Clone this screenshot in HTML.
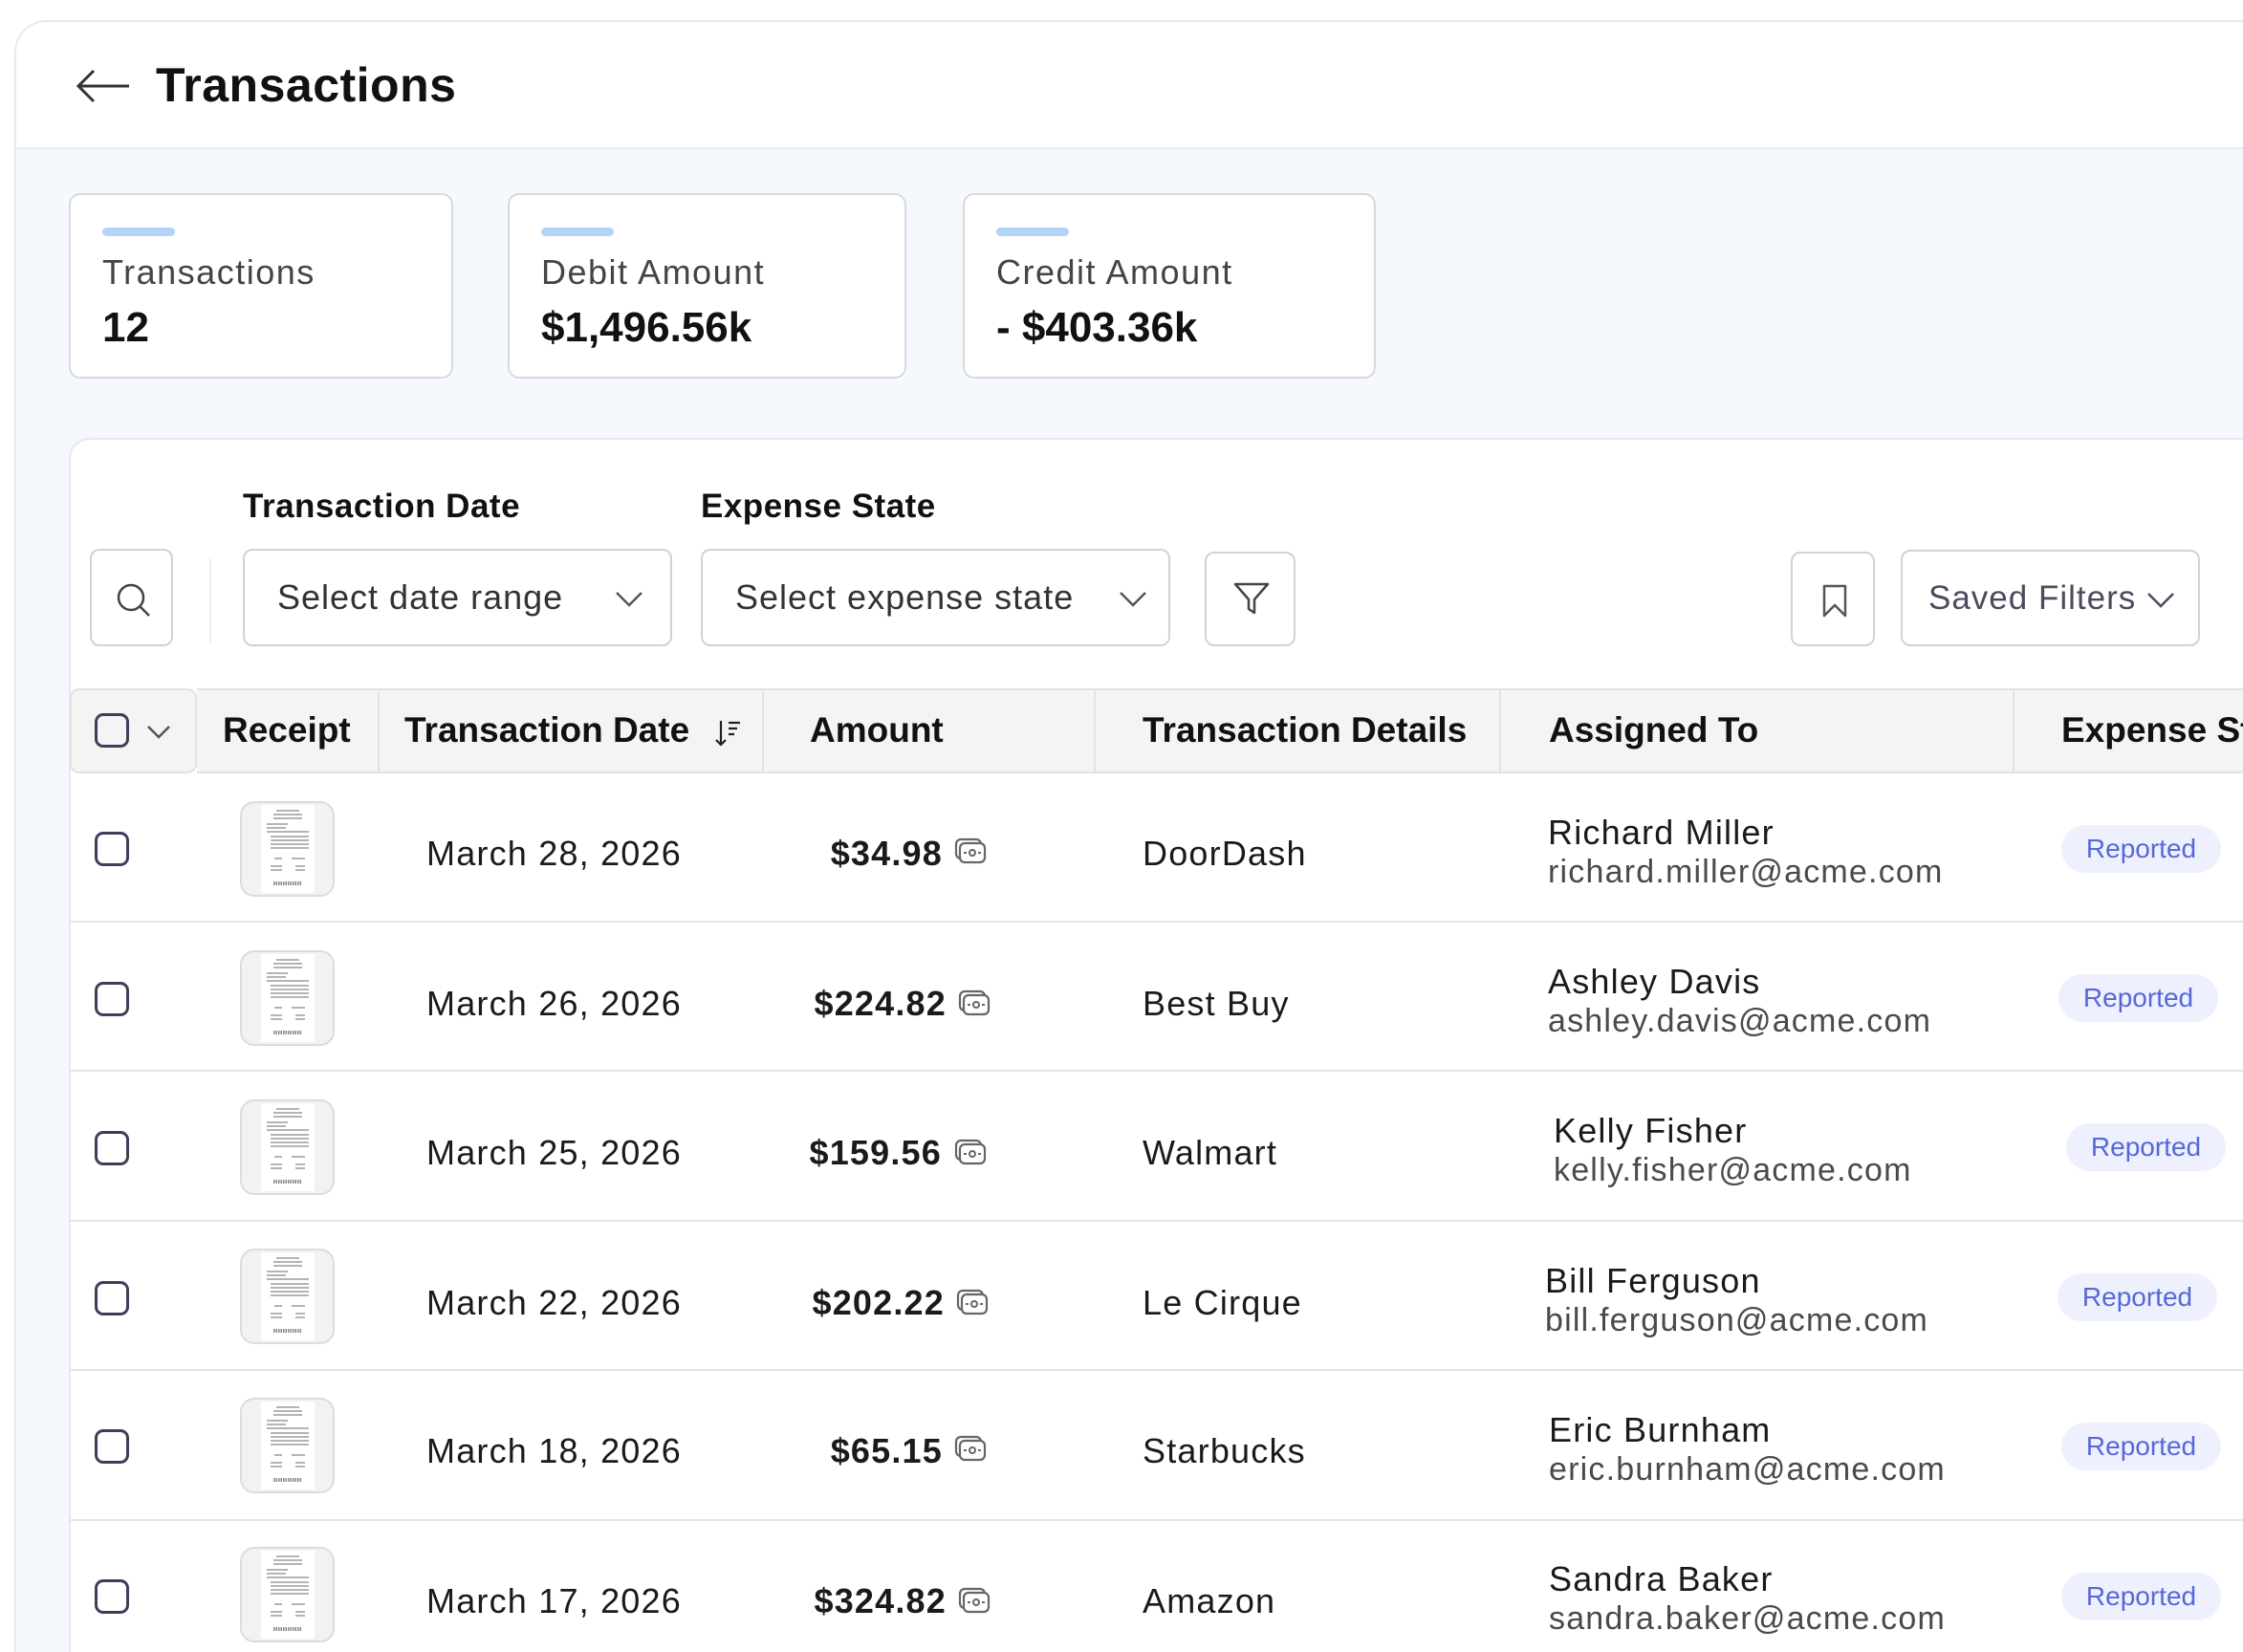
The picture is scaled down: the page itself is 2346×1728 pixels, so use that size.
<!DOCTYPE html>
<html style="width:2346px;height:1728px;overflow:hidden"><head><meta charset="utf-8"><style>
*{box-sizing:border-box;margin:0;padding:0}
body{width:2346px;height:1728px;overflow:hidden;background:#fff;font-family:"Liberation Sans",sans-serif;color:#1a1a1a;position:relative}
.a{position:absolute;white-space:nowrap}
.card{position:absolute;top:21px;left:15px;width:2400px;height:1707px;border:2px solid #e6e8ec;border-bottom:none;border-radius:34px 0 0 0;background:#f5f8fc;overflow:hidden}
.hdr{position:absolute;left:0;top:0;right:0;height:133px;background:#fff;border-bottom:2px solid #e8ebef}
.stat{position:absolute;top:202px;height:194px;background:#fff;border:2px solid #d6d9dd;border-radius:12px}
.stat .bar{position:absolute;left:33px;top:34px;width:76px;height:9px;border-radius:5px;background:#b3d3f7}
.stat .l{position:absolute;left:33px;top:60px;font-size:36px;color:#444;letter-spacing:1.5px}
.stat .v{position:absolute;left:33px;top:114px;font-size:44px;font-weight:bold;color:#111}
.panel{position:absolute;left:72px;top:458px;width:2300px;height:1270px;background:#fff;border:2px solid #e6e8ec;border-bottom:none;border-radius:22px 0 0 0}
.box{position:absolute;border:2px solid #cfd2d6;border-radius:10px;background:#fff}
.sel{font-size:36px;color:#333;padding-left:34px;line-height:98px;letter-spacing:1px}
.th{position:absolute;top:720px;height:89px;background:#f4f4f4;border-top:2px solid #e2e2e2;border-bottom:2px solid #e2e2e2;font-size:37px;font-weight:bold;line-height:86px;color:#111}
.row{position:absolute;left:73px;width:2300px;border-bottom:2px solid #e4e4e4;height:156px}
.cb{position:absolute;width:36px;height:36px;border:3px solid #3d3f5a;border-radius:9px}
.t{font-size:36px;color:#1a1a1a;letter-spacing:1.2px}
.hd{font-size:37px;font-weight:bold;color:#111}
.badge{position:absolute;width:167px;height:50px;border-radius:25px;background:#eef1fd;color:#5668d8;font-size:28px;text-align:center;line-height:50px}
</style></head><body>
<div class="card">
 <div class="hdr"></div>
</div>
<svg class="a" style="left:78px;top:70px" width="60" height="40" viewBox="0 0 60 40"><path d="M57 20H5M20 4L4 20L20 36" fill="none" stroke="#333" stroke-width="3"/></svg>
<div class="a" style="left:163px;top:60px;font-size:50px;font-weight:bold;color:#111;letter-spacing:0.5px">Transactions</div>

<div class="stat" style="left:72px;width:402px"><div class="bar"></div><div class="l">Transactions</div><div class="v">12</div></div>
<div class="stat" style="left:531px;width:417px"><div class="bar"></div><div class="l">Debit Amount</div><div class="v">$1,496.56k</div></div>
<div class="stat" style="left:1007px;width:432px"><div class="bar"></div><div class="l">Credit Amount</div><div class="v">- $403.36k</div></div>

<div class="panel"></div>
<div class="a" style="left:254px;top:510px;font-size:35px;font-weight:bold;color:#111;letter-spacing:0.5px">Transaction Date</div>
<div class="a" style="left:733px;top:510px;font-size:35px;font-weight:bold;color:#111;letter-spacing:0.5px">Expense State</div>
<div class="box" style="left:94px;top:574px;width:87px;height:102px"><svg style="position:absolute;left:25px;top:33px" width="38" height="38" viewBox="0 0 38 38"><circle cx="16" cy="16" r="13" fill="none" stroke="#444" stroke-width="2.5"/><path d="M26 26L35 35" stroke="#444" stroke-width="2.5"/></svg></div>
<div class="a" style="left:219px;top:584px;width:2px;height:88px;background:#eceef1"></div>
<div class="box sel" style="left:254px;top:574px;width:449px;height:102px">Select date range<svg style="position:absolute;right:28px;top:42px" width="30" height="18" viewBox="0 0 30 18"><path d="M2 2L15 15L28 2" fill="none" stroke="#555" stroke-width="2.5"/></svg></div>
<div class="box sel" style="left:733px;top:574px;width:491px;height:102px">Select expense state<svg style="position:absolute;right:22px;top:42px" width="30" height="18" viewBox="0 0 30 18"><path d="M2 2L15 15L28 2" fill="none" stroke="#555" stroke-width="2.5"/></svg></div>
<div class="box" style="left:1260px;top:577px;width:95px;height:99px"><svg style="position:absolute;left:28px;top:30px" width="38" height="36" viewBox="0 0 38 36"><path d="M2 2H36L22 18V32L16 28V18Z" fill="none" stroke="#444" stroke-width="2.5" stroke-linejoin="round"/></svg></div>
<div class="box" style="left:1873px;top:577px;width:88px;height:99px"><svg style="position:absolute;left:30px;top:32px" width="28" height="36" viewBox="0 0 28 36"><path d="M3 2H25V33L14 22L3 33Z" fill="none" stroke="#555" stroke-width="2.5" stroke-linejoin="round"/></svg></div>
<div class="box" style="left:1988px;top:575px;width:313px;height:101px;font-size:35px;color:#4a4c5e;line-height:97px;padding-left:27px;letter-spacing:1px">Saved Filters<svg style="position:absolute;right:24px;top:42px" width="30" height="18" viewBox="0 0 30 18"><path d="M2 2L15 15L28 2" fill="none" stroke="#4a4c5e" stroke-width="2.5"/></svg></div>

<div class="th" style="left:73px;width:133px;border:2px solid #e2e2e2;border-radius:10px"><div class="cb" style="left:24px;top:24px"></div><svg style="position:absolute;left:78px;top:36px" width="26" height="16" viewBox="0 0 26 16"><path d="M2 2L13 13L24 2" fill="none" stroke="#555" stroke-width="2.5"/></svg></div>
<div class="th" style="left:206px;width:2200px;border-left:none"></div>
<div class="a" style="left:395px;top:722px;width:2px;height:85px;background:#e2e2e2"></div>
<div class="a" style="left:797px;top:722px;width:2px;height:85px;background:#e2e2e2"></div>
<div class="a" style="left:1144px;top:722px;width:2px;height:85px;background:#e2e2e2"></div>
<div class="a" style="left:1568px;top:722px;width:2px;height:85px;background:#e2e2e2"></div>
<div class="a" style="left:2105px;top:722px;width:2px;height:85px;background:#e2e2e2"></div>
<div class="a hd" style="left:233px;top:743px">Receipt</div>
<div class="a hd" style="left:423px;top:743px">Transaction Date</div>
<svg class="a" style="left:748px;top:752px" width="28" height="30" viewBox="0 0 28 30"><path d="M6 2V27M1 22L6 27L11 22M14 4H26M14 10H23M14 16H20" fill="none" stroke="#222" stroke-width="2.2"/></svg>
<div class="a hd" style="left:847px;top:743px">Amount</div>
<div class="a hd" style="left:1195px;top:743px">Transaction Details</div>
<div class="a hd" style="left:1620px;top:743px">Assigned To</div>
<div class="a hd" style="left:2156px;top:743px">Expense St</div>

<div class="row" style="top:809px"></div>
<div class="row" style="top:965px"></div>
<div class="row" style="top:1122px"></div>
<div class="row" style="top:1278px"></div>
<div class="row" style="top:1435px"></div>
<div class="row" style="top:1591px;border-bottom:none;height:137px"></div>

<svg width="0" height="0" style="position:absolute"><defs>
<g id="rc"><rect x="1" y="1" width="97" height="98" rx="14" fill="#f2f2f2" stroke="#dcdcdc" stroke-width="2"/><rect x="22" y="4" width="56" height="92" fill="#fff"/><g stroke="#888" stroke-width="1.3"><path d="M38 10H62M35 14H65M35 18H65M28 24H50M28 28H48M28 32H72M32 37H72M32 41H72M32 45H72M32 49H72M36 60H44M54 60H68M32 68H44M58 68H68M32 72H44M58 72H68"/><path d="M35 86H65" stroke-width="4" stroke-dasharray="1.5 1"/></g></g>
<g id="mi"><rect x="2" y="2" width="26" height="20" rx="5" fill="#fff" stroke="#666" stroke-width="2.2"/><rect x="6" y="6" width="26" height="20" rx="5" fill="#fff" stroke="#666" stroke-width="2.2"/><circle cx="19" cy="16" r="3" fill="none" stroke="#666" stroke-width="2"/><path d="M10 16H13M25 16H28" stroke="#666" stroke-width="2"/></g>
</defs></svg>

<div class="cb" style="left:99px;top:870px"></div>
<svg class="a" style="left:251px;top:838px" width="100" height="101"><use href="#rc"/></svg>
<div class="a t" style="left:446px;top:872px">March 28, 2026</div>
<div class="a t" style="right:1360px;top:872px;font-weight:bold">$34.98</div>
<svg class="a" style="left:998px;top:876px" width="36" height="30"><use href="#mi"/></svg>
<div class="a t" style="left:1195px;top:872px">DoorDash</div>
<div class="a t" style="left:1619px;top:850px">Richard Miller</div>
<div class="a t" style="left:1619px;top:893px;font-size:34px;color:#4a4a4a">richard.miller@acme.com</div>
<div class="badge" style="left:2156px;top:863px">Reported</div>

<div class="cb" style="left:99px;top:1027px"></div>
<svg class="a" style="left:251px;top:994px" width="100" height="101"><use href="#rc"/></svg>
<div class="a t" style="left:446px;top:1029px">March 26, 2026</div>
<div class="a t" style="right:1356px;top:1029px;font-weight:bold">$224.82</div>
<svg class="a" style="left:1002px;top:1035px" width="36" height="30"><use href="#mi"/></svg>
<div class="a t" style="left:1195px;top:1029px">Best Buy</div>
<div class="a t" style="left:1619px;top:1006px">Ashley Davis</div>
<div class="a t" style="left:1619px;top:1049px;font-size:34px;color:#4a4a4a">ashley.davis@acme.com</div>
<div class="badge" style="left:2153px;top:1019px">Reported</div>

<div class="cb" style="left:99px;top:1183px"></div>
<svg class="a" style="left:251px;top:1150px" width="100" height="101"><use href="#rc"/></svg>
<div class="a t" style="left:446px;top:1185px">March 25, 2026</div>
<div class="a t" style="right:1361px;top:1185px;font-weight:bold">$159.56</div>
<svg class="a" style="left:998px;top:1191px" width="36" height="30"><use href="#mi"/></svg>
<div class="a t" style="left:1195px;top:1185px">Walmart</div>
<div class="a t" style="left:1625px;top:1162px">Kelly Fisher</div>
<div class="a t" style="left:1625px;top:1205px;font-size:34px;color:#4a4a4a">kelly.fisher@acme.com</div>
<div class="badge" style="left:2161px;top:1175px">Reported</div>

<div class="cb" style="left:99px;top:1340px"></div>
<svg class="a" style="left:251px;top:1306px" width="100" height="101"><use href="#rc"/></svg>
<div class="a t" style="left:446px;top:1342px">March 22, 2026</div>
<div class="a t" style="right:1358px;top:1342px;font-weight:bold">$202.22</div>
<svg class="a" style="left:1000px;top:1348px" width="36" height="30"><use href="#mi"/></svg>
<div class="a t" style="left:1195px;top:1342px">Le Cirque</div>
<div class="a t" style="left:1616px;top:1319px">Bill Ferguson</div>
<div class="a t" style="left:1616px;top:1362px;font-size:34px;color:#4a4a4a">bill.ferguson@acme.com</div>
<div class="badge" style="left:2152px;top:1332px">Reported</div>

<div class="cb" style="left:99px;top:1495px"></div>
<svg class="a" style="left:251px;top:1462px" width="100" height="101"><use href="#rc"/></svg>
<div class="a t" style="left:446px;top:1497px">March 18, 2026</div>
<div class="a t" style="right:1360px;top:1497px;font-weight:bold">$65.15</div>
<svg class="a" style="left:998px;top:1501px" width="36" height="30"><use href="#mi"/></svg>
<div class="a t" style="left:1195px;top:1497px">Starbucks</div>
<div class="a t" style="left:1620px;top:1475px">Eric Burnham</div>
<div class="a t" style="left:1620px;top:1518px;font-size:34px;color:#4a4a4a">eric.burnham@acme.com</div>
<div class="badge" style="left:2156px;top:1488px">Reported</div>

<div class="cb" style="left:99px;top:1652px"></div>
<svg class="a" style="left:251px;top:1618px" width="100" height="101"><use href="#rc"/></svg>
<div class="a t" style="left:446px;top:1654px">March 17, 2026</div>
<div class="a t" style="right:1356px;top:1654px;font-weight:bold">$324.82</div>
<svg class="a" style="left:1002px;top:1660px" width="36" height="30"><use href="#mi"/></svg>
<div class="a t" style="left:1195px;top:1654px">Amazon</div>
<div class="a t" style="left:1620px;top:1631px">Sandra Baker</div>
<div class="a t" style="left:1620px;top:1674px;font-size:34px;color:#4a4a4a">sandra.baker@acme.com</div>
<div class="badge" style="left:2156px;top:1645px">Reported</div>
</body></html>
